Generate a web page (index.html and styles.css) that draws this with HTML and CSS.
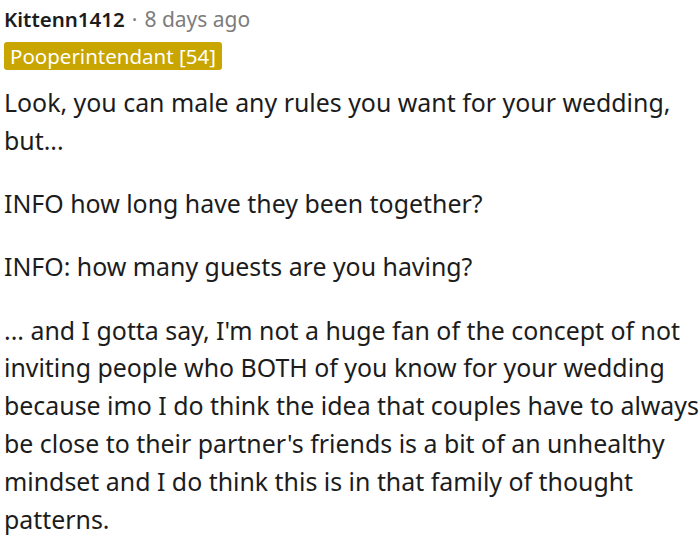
FILE: index.html
```html
<!DOCTYPE html>
<html>
<head>
<meta charset="utf-8">
<link rel="stylesheet" href="styles.css">
</head>
<body>
<div class="comment">
  <div class="meta"><span class="author">Kittenn1412</span><span class="dot">·</span><span class="time">8 days ago</span></div>
  <div class="flair-row"><span class="flair">Pooperintendant [54]</span></div>
  <div class="body">
    <p>Look, you can male any rules you want for your wedding, but...</p>
    <p>INFO how long have they been together?</p>
    <p>INFO: how many guests are you having?</p>
    <p>... and I gotta say, I'm not a huge fan of the concept of not inviting people who BOTH of you know for your wedding because imo I do think the idea that couples have to always be close to their partner's friends is a bit of an unhealthy mindset and I do think this is in that family of thought patterns.</p>
  </div>
</div>
</body>
</html>
```
FILE: styles.css
```css
html, body { margin: 0; padding: 0; background: #fff; }
.comment { padding: 4px 0 0 4px; font-family: "Noto Sans", sans-serif; }
.meta { display: flex; align-items: baseline; font-size: 21px; line-height: 30px; }
.author { color: #1c1c1c; font-weight: 600; font-size: 20.5px; }
.dot { color: #7c7c7c; margin: 0 7px; }
.time { color: #7c7c7c; }
.flair-row { margin-top: 8px; display: flex; }
.flair { background: #c9a500; color: #fff; font-size: 20.5px; line-height: 28px; padding: 0 6px; border-radius: 3px; }
.body { color: #1c1c1c; font-size: 24.9px; line-height: 37.8px; margin-top: 14px; }
.body p { margin: 0 0 25.5px 0; }
```
